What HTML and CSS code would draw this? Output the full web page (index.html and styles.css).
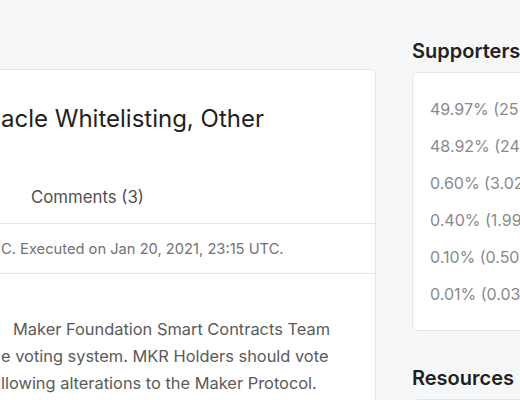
FILE: index.html
```html
<!DOCTYPE html>
<html>
<head>
<meta charset="utf-8">
<link rel="stylesheet" href="styles.css">
</head>
<body>
<div class="page">
  <main class="main">
    <section class="card">
      <div class="card-head">
        <h1 class="title">acle Whitelisting, Other</h1>
      </div>
      <nav class="tabs">
        <span class="tab">Comments (3)</span>
      </nav>
      <div class="meta">C. Executed on Jan 20, 2021, 23:15 UTC.</div>
      <div class="body">
        <p class="text"><span class="l1">Maker Foundation Smart Contracts Team</span><br>e voting system. MKR Holders should vote<br>llowing alterations to the Maker Protocol.</p>
      </div>
    </section>
  </main>
  <aside class="side">
    <h2 class="side-title">Supporters</h2>
    <div class="side-card">
      <div class="row">49.97% (25</div>
      <div class="row">48.92% (24</div>
      <div class="row">0.60% (3.02</div>
      <div class="row">0.40% (1.99</div>
      <div class="row">0.10% (0.50</div>
      <div class="row">0.01% (0.03</div>
    </div>
    <h2 class="side-title res">Resources</h2>
    <div class="side-card small"></div>
  </aside>
</div>
</body>
</html>
```
FILE: styles.css
```css
html, body {
  margin: 0;
  padding: 0;
  background: #f6f7f9;
  overflow: hidden;
  width: 520px;
  height: 400px;
}
body {
  font-family: Inter, "Liberation Sans", sans-serif;
  color: #231f20;
}
.page {
  display: flex;
  gap: 36px;
  align-items: flex-start;
}
.main {
  flex: none;
  width: 396px;
  margin-left: -20px;
  padding-top: 69px;
}
.card {
  background: #fff;
  border: 1px solid #e3e5e8;
  border-radius: 6px;
  min-height: 400px;
}
.card-head {
  padding: 33px 0 0 20px;
  height: 68px;
}
.title {
  margin: 0;
  font-size: 24px;
  font-weight: 400;
  line-height: 32px;
  color: #231f20;
}
.tabs {
  display: flex;
  height: 52px;
  align-items: center;
  padding-left: 50px;
  border-bottom: 1px solid #e3e5e8;
}
.tab {
  font-size: 16.8px;
  color: #4f4f4f;
}
.meta {
  height: 49px;
  display: flex;
  align-items: center;
  padding-left: 20px;
  font-size: 14.7px;
  color: #727272;
  border-bottom: 1px solid #e3e5e8;
}
.body {
  padding: 42px 0 0 20px;
}
.text {
  margin: 0;
  font-size: 16.4px;
  line-height: 27px;
  color: #5a5a5a;
}
.l1 {
  padding-left: 12px;
}
.side {
  flex: none;
  width: 300px;
  padding-top: 38px;
}
.side-title {
  margin: 0;
  font-size: 20px;
  font-weight: 600;
  line-height: 26px;
  color: #231f20;
}
.side-card {
  margin-top: 8px;
  background: #fff;
  border: 1px solid #e3e5e8;
  border-radius: 6px;
  padding: 18px 0 17px 17px;
}
.row {
  font-size: 16px;
  line-height: 37px;
  color: #8a8a8a;
}
.res {
  margin-top: 34px;
}
.side-card.small {
  height: 60px;
  padding: 0;
}
```
